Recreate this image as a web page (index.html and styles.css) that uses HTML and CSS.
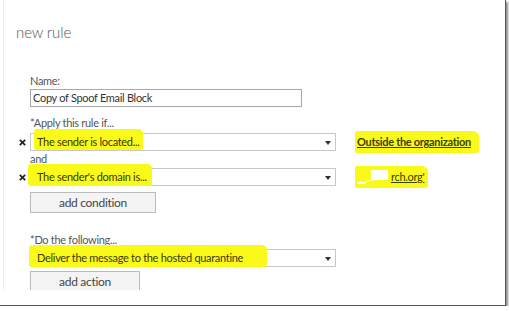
FILE: index.html
```html
<!DOCTYPE html>
<html lang="en">
<head>
    <meta charset="UTF-8">
    <title>new rule</title>
    <link rel="stylesheet" href="styles.css">
</head>
<body>
<div class="shot">
    <div class="panel">
        <h1 class="title">new rule</h1>
        <div class="form">
            <div class="label label-name">Name:</div>
            <div class="textbox">Copy of Spoof Email Block</div>

            <div class="label label-apply">*Apply this rule if...</div>
            <div class="row row-first">
                <span class="remove">
                    <svg width="7" height="7" viewBox="0 0 7 7"><path d="M0.8 0.8 L6.2 6.2 M6.2 0.8 L0.8 6.2" stroke="#222" stroke-width="1.7"/></svg>
                </span>
                <div class="select">
                    <span class="mark mark-one">The sender is located...</span>
                    <span class="arrow"></span>
                </div>
                <a class="value mark-value">Outside the organization</a>
            </div>

            <div class="label label-and">and</div>
            <div class="row row-next">
                <span class="remove">
                    <svg width="7" height="7" viewBox="0 0 7 7"><path d="M0.8 0.8 L6.2 6.2 M6.2 0.8 L0.8 6.2" stroke="#222" stroke-width="1.7"/></svg>
                </span>
                <div class="select">
                    <span class="mark mark-two">The sender's domain is...</span>
                    <span class="arrow"></span>
                </div>
                <a class="value mark-value mark-domain"><span class="erased"></span>rch.org'</a>
            </div>
            <button class="btn btn-condition">add condition</button>

            <div class="label label-do">*Do the following...</div>
            <div class="row row-next row-plain">
                <div class="select">
                    <span class="mark mark-three">Deliver the message to the hosted quarantine</span>
                    <span class="arrow"></span>
                </div>
            </div>
            <button class="btn btn-action">add action</button>
        </div>
    </div>
</div>
</body>
</html>
```

FILE: styles.css
```css
body {
    margin: 0;
    background-color: #fff;
    font-family: Lato, "Liberation Sans", sans-serif;
    letter-spacing: -0.3px;
    color: #444;
}

.shot {
    width: 506px;
    height: 306px;
    box-sizing: border-box;
    border-right: 1px solid #555;
    border-bottom: 1px solid #555;
    box-shadow: 2px 2px 2px rgba(0, 0, 0, 0.45);
    background-color: #fff;
}

.panel {
    height: 290px;
    margin-left: 3px;
    padding-left: 12px;
    border-left: 1px solid #eee;
    overflow: hidden;
}

.title {
    margin: 0;
    padding-top: 22px;
    font-size: 15px;
    font-weight: 300;
    line-height: 20px;
    letter-spacing: -0.1px;
    color: #555;
}

.form {
    margin-left: 14px;
}

.label {
    font-size: 11px;
    line-height: 14px;
    color: #555;
}
.label-name { margin-top: 32px; }
.label-apply { margin-top: 9px; }
.label-and { margin-top: 1px; }
.label-do { margin-top: 20px; }

.textbox {
    margin-top: 1px;
    width: 272px;
    height: 18px;
    box-sizing: border-box;
    border: 1px solid #a8a8a8;
    padding-left: 2px;
    font-size: 11px;
    line-height: 16px;
    color: #333;
}

.row {
    display: flex;
    align-items: center;
    height: 18px;
    margin-left: -11px;
}
.row-first { margin-top: 3px; }
.row-next { margin-top: 2px; }
.row-plain { margin-left: 0; }

.remove {
    width: 11px;
    display: flex;
    align-items: center;
}

.select {
    width: 306px;
    height: 18px;
    box-sizing: border-box;
    border: 1px solid #c8c8c8;
    padding-left: 6px;
    display: flex;
    align-items: flex-start;
    font-size: 11px;
    color: #333;
}

.mark {
    background-color: #f9f91a;
    line-height: 16px;
    border-radius: 3px 5px 2px 3px;
    color: #3a3a08;
}
.mark-one {
    margin: -5px 0 0 -3px;
    padding: 5px 3px 0 3px;
}
.mark-two {
    margin: -5px 0 0 -9px;
    padding: 5px 5px 1px 9px;
}
.mark-three {
    margin: -5px 0 0 -8px;
    padding: 5px 24px 1px 8px;
}

.arrow {
    margin: 7px 4px 0 auto;
    border-left: 3px solid transparent;
    border-right: 3px solid transparent;
    border-top: 4px solid #333;
}

.value {
    margin: -2px 0 -2px 19px;
    font-size: 11px;
    font-weight: bold;
    line-height: 22px;
    text-decoration: underline;
    color: #3c4200;
}
.mark-value {
    background-color: #f9f91a;
    padding: 0 8px 0 2px;
    border-radius: 2px 6px 3px 2px;
}
.mark-domain {
    display: flex;
    align-items: center;
    font-weight: normal;
    padding-right: 4px;
}

.erased {
    width: 31px;
    height: 14px;
    margin-right: 3px;
    background-color: #fff;
    clip-path: polygon(45% 0, 100% 0, 100% 70%, 30% 75%, 28% 100%, 0 100%, 0 85%, 45% 80%);
}

.btn {
    display: block;
    height: 21px;
    padding: 0;
    border: 1px solid #bbb;
    background-color: #f4f4f4;
    font-family: Lato, "Liberation Sans", sans-serif;
    font-size: 12px;
    letter-spacing: -0.3px;
    color: #444;
}
.btn-condition {
    margin-top: 6px;
    width: 126px;
}
.btn-action {
    margin-top: 4px;
    width: 110px;
}
```
